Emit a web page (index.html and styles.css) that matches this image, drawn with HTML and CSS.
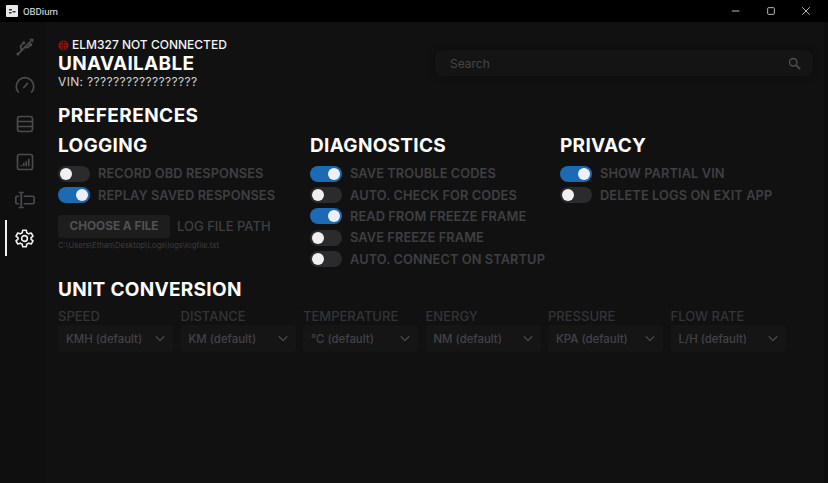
FILE: index.html
```html
<!DOCTYPE html>
<html lang="en">
<head>
<meta charset="utf-8">
<title>OBDium</title>
<link rel="stylesheet" href="styles.css">
</head>
<body>
<header class="titlebar">
  <div class="app-id">
    <svg class="app-icon" viewBox="0 0 12 12"><rect width="12" height="12" rx="1" fill="#e8e8e8"/><path d="M3 4h3v1.500H3zM6.500 6h3v1.500h-3zM3 7h2.500v1.500H3z" fill="#333"/></svg>
    <span>OBDium</span>
  </div>
  <div class="win-controls">
    <svg viewBox="0 0 12 12"><path d="M1 6h9" stroke="#ddd" fill="none"/></svg>
    <svg viewBox="0 0 12 12"><rect x="2" y="2" width="8" height="8" rx="1" stroke="#ddd" fill="none"/></svg>
    <svg viewBox="0 0 12 12"><path d="M1.500 1.500l9 9M10.500 1.500l-9 9" stroke="#ddd" fill="none"/></svg>
  </div>
</header>
<div class="app">
  <nav class="sidebar">
    <svg class="nav-icon" viewBox="0 0 24 24"><g fill="none" stroke="#4b4b4e" stroke-width="2" stroke-linecap="round"><path d="M3.500 20.500 19 5"/><path d="M8 16l-1.500-5L10 7.500"/><path d="M12 12.500h3.500l2.500-2.500"/></g><circle cx="3.500" cy="20.500" r="1.800" fill="#4b4b4e"/><circle cx="10.500" cy="7" r="1.800" fill="#4b4b4e"/><rect x="17" y="7.500" width="3.500" height="3.500" fill="#4b4b4e"/><path d="M17 2h5v5z" fill="#4b4b4e"/></svg>
    <svg class="nav-icon" viewBox="0 0 24 24"><path d="M4 20.500A10.500 10.500 0 1 1 20 20.500M10.500 15l4.500-5" fill="none" stroke="#4b4b4e" stroke-width="2" stroke-linecap="round"/></svg>
    <svg class="nav-icon" viewBox="0 0 24 24"><rect x="3" y="3" width="18" height="18" rx="3" fill="none" stroke="#4b4b4e" stroke-width="2"/><path d="M3 9h18M3 15h18" stroke="#4b4b4e" stroke-width="2"/></svg>
    <svg class="nav-icon" viewBox="0 0 24 24"><rect x="3" y="3" width="18" height="18" rx="2.500" fill="none" stroke="#4b4b4e" stroke-width="2"/><path d="M7.500 17v-1.500M10.500 17v-4M13.500 17v-6M16.500 17V8" stroke="#4b4b4e" stroke-width="2"/></svg>
    <svg class="nav-icon" viewBox="0 0 24 24"><path d="M5 7.500H2.500A1.500 1.500 0 0 0 1 9v6a1.500 1.500 0 0 0 1.500 1.500H5M10.500 7.500h11A1.500 1.500 0 0 1 23 9v6a1.500 1.500 0 0 1-1.500 1.500h-11M4.500 3h6M4.500 21h6M7.500 3v18" fill="none" stroke="#4b4b4e" stroke-width="2"/></svg>
    <div class="nav-active">
      <svg class="nav-icon gear" viewBox="0 0 24 24"><path d="M10 2.500h4l.6 3 2.200 1.200 2.900-1 2 3.500-2.300 2a7 7 0 0 1 0 1.600l2.300 2-2 3.500-2.900-1-2.200 1.200-.6 3h-4l-.6-3-2.200-1.200-2.900 1-2-3.500 2.300-2a7 7 0 0 1 0-1.600l-2.300-2 2-3.500 2.900 1 2.200-1.200z" fill="none" stroke="#f2f2f2" stroke-width="1.800" stroke-linejoin="round"/><circle cx="12" cy="12" r="3.300" fill="none" stroke="#f2f2f2" stroke-width="1.800"/></svg>
    </div>
  </nav>
  <main class="content">
    <section class="top">
      <div class="status">
        <div class="conn">
          <svg class="globe" viewBox="0 0 12 12"><circle cx="6" cy="6" r="5.500" fill="#8e2018"/><path d="M.5 6h11M6 .5v11M1.500 3.200h9M1.500 8.800h9M6 .5C3 3 3 9 6 11.500M6 .5C9 3 9 9 6 11.500" fill="none" stroke="#2a1211" stroke-width=".8"/></svg>
          <span>ELM327 NOT CONNECTED</span>
        </div>
        <div class="unavail">UNAVAILABLE</div>
        <div class="vin">VIN: ?????????????????</div>
      </div>
      <div class="search">
        <span>Search</span>
        <svg viewBox="0 0 24 24"><circle cx="10" cy="10" r="6" fill="none" stroke="#4f4f52" stroke-width="2.200"/><path d="M14.500 14.500l6.500 6.500" stroke="#4f4f52" stroke-width="2.600"/></svg>
      </div>
    </section>
    <h1 class="page-title">PREFERENCES</h1>
    <section class="pref-grid">
      <div class="col">
        <h2>LOGGING</h2>
        <div class="row"><i class="toggle"></i><span>RECORD OBD RESPONSES</span></div>
        <div class="row"><i class="toggle on"></i><span>REPLAY SAVED RESPONSES</span></div>
        <div class="file-row"><button class="file-btn">CHOOSE A FILE</button><span>LOG FILE PATH</span></div>
        <div class="file-path">C:\Users\Ethan\Desktop\Logs\logs\logfile.txt</div>
      </div>
      <div class="col">
        <h2>DIAGNOSTICS</h2>
        <div class="row"><i class="toggle on"></i><span>SAVE TROUBLE CODES</span></div>
        <div class="row"><i class="toggle"></i><span>AUTO. CHECK FOR CODES</span></div>
        <div class="row"><i class="toggle on"></i><span>READ FROM FREEZE FRAME</span></div>
        <div class="row"><i class="toggle"></i><span>SAVE FREEZE FRAME</span></div>
        <div class="row"><i class="toggle"></i><span>AUTO. CONNECT ON STARTUP</span></div>
      </div>
      <div class="col">
        <h2>PRIVACY</h2>
        <div class="row"><i class="toggle on"></i><span>SHOW PARTIAL VIN</span></div>
        <div class="row"><i class="toggle"></i><span>DELETE LOGS ON EXIT APP</span></div>
      </div>
    </section>
    <h2 class="unit-title">UNIT CONVERSION</h2>
    <section class="units">
      <div class="unit"><label>SPEED</label><div class="select"><span>KMH (default)</span><svg viewBox="0 0 12 8"><path d="M1 1.500l5 5 5-5" /></svg></div></div>
      <div class="unit"><label>DISTANCE</label><div class="select"><span>KM (default)</span><svg viewBox="0 0 12 8"><path d="M1 1.500l5 5 5-5" /></svg></div></div>
      <div class="unit"><label>TEMPERATURE</label><div class="select"><span>°C (default)</span><svg viewBox="0 0 12 8"><path d="M1 1.500l5 5 5-5" /></svg></div></div>
      <div class="unit"><label>ENERGY</label><div class="select"><span>NM (default)</span><svg viewBox="0 0 12 8"><path d="M1 1.500l5 5 5-5" /></svg></div></div>
      <div class="unit"><label>PRESSURE</label><div class="select"><span>KPA (default)</span><svg viewBox="0 0 12 8"><path d="M1 1.500l5 5 5-5" /></svg></div></div>
      <div class="unit"><label>FLOW RATE</label><div class="select"><span>L/H (default)</span><svg viewBox="0 0 12 8"><path d="M1 1.500l5 5 5-5" /></svg></div></div>
    </section>
  </main>
</div>
</body>
</html>
```
FILE: styles.css
```css
* { box-sizing: border-box; }
html, body { height: 100%; }
body {
  margin: 0;
  background: #111112;
  color: #fff;
  font-family: Inter, "Open Sans", "Liberation Sans", sans-serif;
  overflow: hidden;
  display: flex;
  flex-direction: column;
}
.titlebar {
  height: 22px;
  background: #000;
  display: flex;
  align-items: center;
  justify-content: space-between;
  flex: none;
}
.app-id {
  display: flex;
  align-items: center;
  gap: 5px;
  padding-left: 6px;
  font-size: 9.600px;
  color: #e4e4e4;
  font-family: Roboto, sans-serif;
}
.app-icon { width: 12px; height: 12px; }
.win-controls { display: flex; gap: 25px; padding-right: 17px; align-items: center; }
.win-controls svg { width: 10px; height: 10px; overflow: visible; }
.app { display: flex; flex: 1; border-right: 4px solid #0d0d0e; min-height: 0; }
.sidebar {
  width: 46px;
  flex: none;
  background: #0f0f10;
  display: flex;
  flex-direction: column;
  align-items: center;
  padding-top: 15px;
  gap: 18.300px;
  padding-left: 3px;
}
.nav-icon { width: 20px; height: 20px; display: block; }
.nav-active { position: relative; }
.nav-active::before {
  content: "";
  position: absolute;
  left: -9px;
  top: -8px;
  width: 2px;
  height: 36px;
  background: #f2f2f2;
}
.gear { width: 21px; height: 21px; }
.content { flex: 1; padding: 15px 11px 0 12px; min-width: 0; }
.top { display: flex; justify-content: space-between; align-items: flex-start; height: 67px; }
.conn {
  display: flex;
  align-items: center;
  gap: 3px;
  font-size: 12px;
  font-weight: 500;
  line-height: 16px;
  color: #f4f4f4;
}
.globe { width: 11px; height: 11px; }
.unavail { font-size: 19px; font-weight: 700; line-height: 20px; letter-spacing: .3px; margin-top: 1px; }
.vin { font-size: 12px; line-height: 15px; letter-spacing: .35px; color: #d4d4d4; }
.search {
  width: 378px;
  height: 26px;
  margin-top: 13px;
  background: #141415;
  border-radius: 7px;
  box-shadow: 0 0 6px #0c0c0c;
  display: flex;
  align-items: center;
  justify-content: space-between;
  padding: 0 11px 0 15px;
  font-size: 12px;
  color: #444447;
}
.search svg { width: 15px; height: 15px; }
.page-title { font-size: 19px; font-weight: 700; line-height: 24px; margin: 0 0 6px; letter-spacing: .45px; }
.pref-grid { display: grid; grid-template-columns: 252px 250px 1fr; height: 144px; }
h2 { font-size: 19px; font-weight: 700; line-height: 24px; margin: 0 0 5px; letter-spacing: .3px; }
.row {
  display: flex;
  align-items: center;
  gap: 8px;
  height: 21.400px;
  font-size: 12.800px;
  font-weight: 600;
  letter-spacing: .1px;
  color: #3f3f42;
  white-space: nowrap;
}
.toggle {
  width: 32px;
  height: 16px;
  border-radius: 8px;
  background: #2b2b2d;
  position: relative;
  flex: none;
}
.toggle::after {
  content: "";
  position: absolute;
  left: 2px;
  top: 2px;
  width: 12px;
  height: 12px;
  border-radius: 50%;
  background: #f0f0f4;
}
.toggle.on { background: #1b6ab3; }
.toggle.on::after { left: 18px; }
.file-row {
  display: flex;
  align-items: center;
  gap: 7px;
  margin-top: 9px;
  font-size: 13px;
  font-weight: 500;
  color: #3f3f42;
}
.file-btn {
  width: 112px;
  height: 23px;
  padding: 0;
  border: 0;
  border-radius: 3px;
  background: #1d1d1e;
  color: #505053;
  font: inherit;
  font-size: 11.800px;
  font-weight: 700;
}
.file-path { font-size: 7.700px; line-height: 12px; margin-top: 2px; color: #3d3d40; white-space: nowrap; }
.unit-title { margin: 0 0 7px; }
.units { display: grid; grid-template-columns: repeat(6, 115px); column-gap: 7.500px; }
.unit label { display: block; font-size: 13px; font-weight: 500; line-height: 15px; color: #343437; }
.select {
  margin-top: 1px;
  height: 27px;
  background: #151516;
  border-radius: 3px;
  display: flex;
  align-items: center;
  justify-content: space-between;
  padding: 0 8px;
  font-size: 11.400px;
  font-weight: 500;
  color: #434346;
}
.select svg { width: 10px; height: 7px; fill: none; stroke: #55555a; stroke-width: 1.300; }
```
